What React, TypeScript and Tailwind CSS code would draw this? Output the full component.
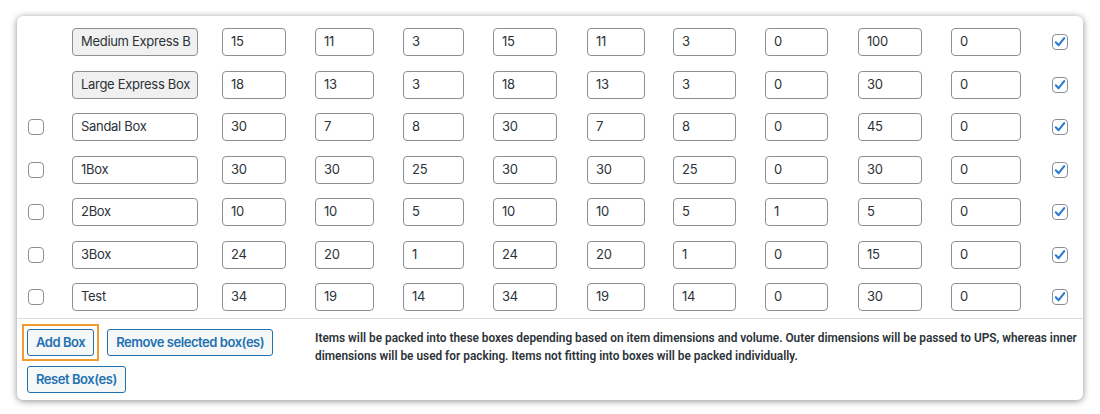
import React from "react";

const rows: { name: string; vals: string[]; locked: boolean }[] = [
  { name: "Medium Express B", vals: ["15", "11", "3", "15", "11", "3", "0", "100", "0"], locked: true },
  { name: "Large Express Box", vals: ["18", "13", "3", "18", "13", "3", "0", "30", "0"], locked: true },
  { name: "Sandal Box", vals: ["30", "7", "8", "30", "7", "8", "0", "45", "0"], locked: false },
  { name: "1Box", vals: ["30", "30", "25", "30", "30", "25", "0", "30", "0"], locked: false },
  { name: "2Box", vals: ["10", "10", "5", "10", "10", "5", "1", "5", "0"], locked: false },
  { name: "3Box", vals: ["24", "20", "1", "24", "20", "1", "0", "15", "0"], locked: false },
  { name: "Test", vals: ["34", "19", "14", "34", "19", "14", "0", "30", "0"], locked: false },
];

const cellW = [93, 88, 90, 94, 86, 92, 93, 93, 101];
const inputW = [64, 59, 61, 64, 58, 63, 63, 64, 70];

function Field({ value, width, gray }: { value: string; width: number; gray?: boolean }) {
  return (
    <div
      className={`h-[28px] rounded-[4px] border border-[#8c8f94] px-[8px] flex items-center overflow-hidden whitespace-nowrap text-[13px] tracking-[-0.3px] text-[#2c3338] ${
        gray ? "bg-[#f0f0f1]" : "bg-white"
      }`}
      style={{ width }}
    >
      {value}
    </div>
  );
}

function Checkbox({ checked }: { checked?: boolean }) {
  return (
    <div className="w-[16px] h-[16px] rounded-[4px] border border-[#8c8f94] bg-white flex items-center justify-center">
      {checked && (
        <svg width="14" height="14" viewBox="0 0 20 20">
          <path d="M4 10.5 L8 14.5 L16 4.5" fill="none" stroke="#2a7bd0" strokeWidth="3" strokeLinecap="round" strokeLinejoin="round" />
        </svg>
      )}
    </div>
  );
}

function Btn({ children, focus }: { children: React.ReactNode; focus?: boolean }) {
  return (
    <div className="relative">
      {focus && <span className="absolute -inset-[5px] border-2 border-[#f29b2f] pointer-events-none" />}
      <div className="h-[27px] px-[8px] rounded-[3px] border border-[#2271b1] bg-[#f6f7f7] text-[#2271b1] text-[13px] tracking-[-0.45px] font-semibold flex items-center whitespace-nowrap">
        {children}
      </div>
    </div>
  );
}

export default function App() {
  return (
    <div className="w-[1100px] h-[414px] bg-white pt-[16px] pl-[17px]" style={{ fontFamily: "Inter, 'Liberation Sans', sans-serif" }}>
      <div className="w-[1066px] h-[384px] bg-white rounded-[6px] shadow-[0_1px_7px_rgba(0,0,0,0.45)] pt-[4.75px] overflow-hidden">
        <div className="flex flex-col">
          {rows.map((r, i) => (
            <div key={i} className="h-[42.5px] flex items-center pl-[11px]">
              <div className="w-[44px] flex items-center">{!r.locked && <Checkbox />}</div>
              <div className="w-[150px]">
                <Field value={r.name} width={126} gray={r.locked} />
              </div>
              {r.vals.map((v, j) => (
                <div key={j} style={{ width: cellW[j] }}>
                  <Field value={v} width={inputW[j]} />
                </div>
              ))}
              <Checkbox checked />
            </div>
          ))}
        </div>
        <div className="border-t border-[#dcdcde] flex pt-[9.5px]">
          <div className="w-[298px] pl-[10px] flex flex-col gap-[10px]">
            <div className="flex gap-[13px]">
              <Btn focus>Add Box</Btn>
              <Btn>Remove selected box(es)</Btn>
            </div>
            <div className="flex">
              <Btn>Reset Box(es)</Btn>
            </div>
          </div>
          <p
            className="flex-1 pr-[2px] text-[11.85px] leading-[18px] font-semibold text-[#2c3338]"
            style={{ fontFamily: "Roboto, sans-serif" }}
          >
            Items will be packed into these boxes depending based on item dimensions and volume. Outer dimensions will be passed to UPS, whereas inner dimensions will be used for packing. Items not fitting into boxes will be packed individually.
          </p>
        </div>
      </div>
    </div>
  );
}
